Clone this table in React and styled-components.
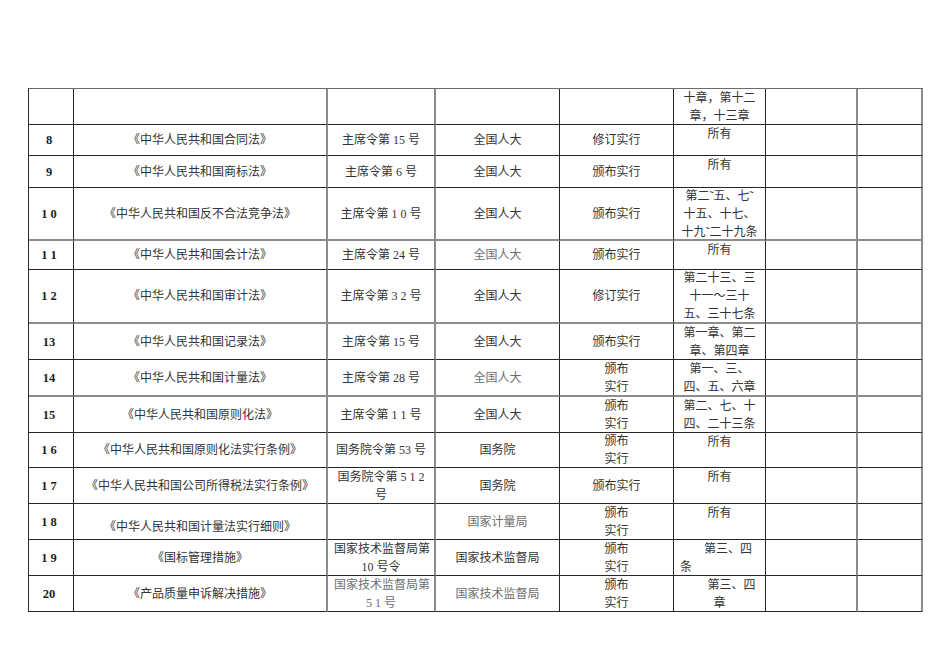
import React from "react";
import styled, { createGlobalStyle } from "styled-components";

const GlobalStyle = createGlobalStyle`
  html, body {
    margin: 0;
    padding: 0;
    background: #ffffff;
  }
  body {
    font-family: "Liberation Serif", "Noto Sans CJK SC", serif;
  }
`;

const COL_WIDTHS = [45, 254, 108, 124, 114, 92, 92, 65];
const ROW_HEIGHTS = [36, 31, 32, 53, 29, 54, 36, 37, 36, 35, 36, 36, 36, 36];
const GRAY_COLS = [1, 2, 6, 7];
const GRAY_ROWS = [3, 5, 7];

const Page = styled.div`
  width: 950px;
  height: 672px;
  box-sizing: border-box;
  padding: 88px 0 0 28px;
  background: #ffffff;
  overflow: hidden;
`;

const Sheet = styled.div`
  display: grid;
  grid-template-columns: ${COL_WIDTHS.map((w) => `${w}px`).join(" ")};
  grid-template-rows: ${ROW_HEIGHTS.map((h) => `${h}px`).join(" ")};
  width: max-content;
  border-top: 1px solid #6a6a6a;
  border-left: 1px solid #2a2a2a;
`;

const vmap = { top: "flex-start", center: "center", bottom: "flex-end" };

const Cell = styled.div`
  box-sizing: border-box;
  display: flex;
  flex-direction: column;
  justify-content: ${(p) => vmap[p.$valign || "center"]};
  text-align: ${(p) => p.$align || "center"};
  padding: 0 6px ${(p) => (p.$valign === "bottom" ? "3px" : "0")};
  border-right: ${(p) => (p.$grayRight ? "2px solid #8c8c8c" : "1px solid #262626")};
  border-bottom: ${(p) => (p.$grayBottom ? "2px solid #8c8c8c" : "1px solid #262626")};
  font-size: 12px;
  line-height: 18px;
  color: ${(p) => (p.$muted ? "#6e6e6e" : "#333333")};
  white-space: nowrap;
  overflow: visible;
`;

const NumCell = styled(Cell)`
  font-weight: 700;
  font-size: 12.5px;
  color: #1e1e1e;
  padding-left: 2px;
`;

const Line = styled.span`
  display: block;
`;

const rows = [
  ["", "", "", "", "", { lines: ["十章，第十二", "章，十三章"] }, "", ""],
  ["8", "《中华人民共和国合同法》", "主席令第 15 号", "全国人大", "修订实行", { lines: ["所有"], valign: "top" }, "", ""],
  ["9", "《中华人民共和国商标法》", "主席令第 6 号", "全国人大", "颁布实行", { lines: ["所有"], valign: "top" }, "", ""],
  ["1 0", "《中华人民共和国反不合法竞争法》", "主席令第 1 0 号", "全国人大", "颁布实行", { lines: ["第二˜五、七˜", "十五、十七、", "十九˜二十九条"] }, "", ""],
  ["1 1", "《中华人民共和国会计法》", "主席令第 24 号", { lines: ["全国人大"], muted: true }, "颁布实行", { lines: ["所有"], valign: "top" }, "", ""],
  ["1 2", "《中华人民共和国审计法》", "主席令第 3 2 号", "全国人大", "修订实行", { lines: ["第二十三、三", "十一～三十", "五、三十七条"] }, "", ""],
  ["13", "《中华人民共和国记录法》", "主席令第 15 号", "全国人大", "颁布实行", { lines: ["第一章、第二", "章、第四章"] }, "", ""],
  ["14", "《中华人民共和国计量法》", "主席令第 28 号", { lines: ["全国人大"], muted: true }, { lines: ["颁布", "实行"] }, { lines: ["第一、三、", "四、五、六章"] }, "", ""],
  ["15", "《中华人民共和国原则化法》", "主席令第 1 1 号", "全国人大", { lines: ["颁布", "实行"] }, { lines: ["第二、七、十", "四、二十三条"] }, "", ""],
  ["1 6", "《中华人民共和国原则化法实行条例》", "国务院令第 53 号", "国务院", { lines: ["颁布", "实行"] }, { lines: ["所有"], valign: "top" }, "", ""],
  ["1 7", "《中华人民共和国公司所得税法实行条例》", { lines: ["国务院令第 5 1 2", "号"] }, "国务院", "颁布实行", { lines: ["所有"], valign: "top" }, "", ""],
  ["1 8", { lines: ["《中华人民共和国计量法实行细则》"], valign: "bottom" }, "", { lines: ["国家计量局"], muted: true }, { lines: ["颁布", "实行"] }, { lines: ["所有"], valign: "top" }, "", ""],
  ["1 9", "《国标管理措施》", { lines: ["国家技术监督局第", "10 号令"] }, "国家技术监督局", { lines: ["颁布", "实行"] }, { lines: ["\u3000\u3000第三、四", "条"], align: "left" }, "", ""],
  ["20", "《产品质量申诉解决措施》", { lines: ["国家技术监督局第", "5 1 号"], muted: true }, { lines: ["国家技术监督局"], muted: true }, { lines: ["颁布", "实行"] }, { lines: ["\u3000\u3000第三、四", "章"] }, "", ""],
];

function renderCell(value, r, c) {
  const spec = typeof value === "string" ? { lines: value ? [value] : [] } : value;
  const common = {
    key: `${r}-${c}`,
    $grayRight: GRAY_COLS.includes(c),
    $grayBottom: GRAY_ROWS.includes(r),
    $valign: spec.valign,
    $align: spec.align,
    $muted: spec.muted,
  };
  const content = spec.lines.map((t, i) => <Line key={i}>{t}</Line>);
  if (c === 0) return <NumCell {...common}>{content}</NumCell>;
  return <Cell {...common}>{content}</Cell>;
}

export default function App() {
  return (
    <>
      <GlobalStyle />
      <Page lang="zh-CN">
        <Sheet>{rows.map((row, r) => row.map((v, c) => renderCell(v, r, c)))}</Sheet>
      </Page>
    </>
  );
}
